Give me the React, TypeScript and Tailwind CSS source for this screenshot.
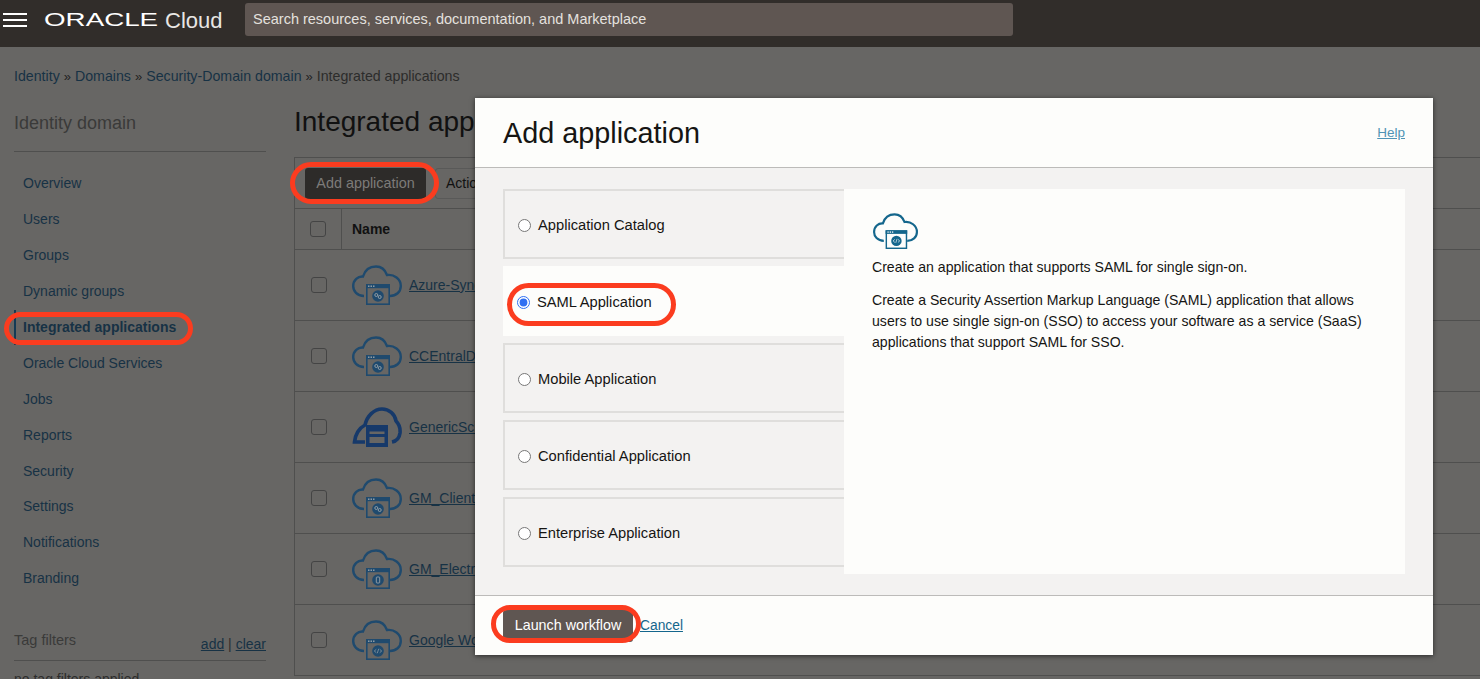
import React from "react";

const NAV_ITEMS = [
    "Overview",
    "Users",
    "Groups",
    "Dynamic groups",
    "Integrated applications",
    "Oracle Cloud Services",
    "Jobs",
    "Reports",
    "Security",
    "Settings",
    "Notifications",
    "Branding",
];

type Glyph = "link" | "code" | "phone" | "plain";

const ROWS: { name: string; glyph: Glyph }[] = [
    { name: "Azure-Sync-App", glyph: "link" },
    { name: "CCEntralDemo", glyph: "link" },
    { name: "GenericScim", glyph: "plain" },
    { name: "GM_ClientApp", glyph: "link" },
    { name: "GM_ElectronApp", glyph: "phone" },
    { name: "Google Workspace", glyph: "code" },
];

const OPTIONS = [
    { label: "Application Catalog", selected: false },
    { label: "SAML Application", selected: true },
    { label: "Mobile Application", selected: false },
    { label: "Confidential Application", selected: false },
    { label: "Enterprise Application", selected: false },
];

function CloudIcon({ glyph, color, dots, className }: { glyph: Glyph; color: string; dots: string; className?: string }) {
    if (glyph === "plain") {
        return (
            <svg viewBox="0 0 50 40" className={className} fill="none">
                <path d="M13 35H2.500C3 28 7 21 13 18C15 9 22 2 30 2C37 2 43 7 44 14C47 17 48.500 21 48 26C47.500 30 45 34 40 35" stroke={color} strokeWidth="3.600" />
                <rect x="14" y="18" width="22" height="22" fill={color} />
                <rect x="17.500" y="24.500" width="15" height="2.500" fill="#676664" />
                <rect x="17.500" y="30" width="15" height="6" fill="#676664" />
            </svg>
        );
    }
    return (
        <svg viewBox="0 0 50 40" className={className} fill="none">
            <path d="M12 31C5 31 1.200 26 1.200 21C1.200 15 6 11 11 11.500C13 5 18 1.500 24 1.500C29 1.500 33 4.500 35 10C42 9 48.800 14 48.800 21C48.800 27 44 31 38 31" stroke={color} strokeWidth="2.400" />
            <rect x="14.800" y="20" width="22.400" height="19.200" stroke={color} strokeWidth="1.600" />
            <rect x="14" y="19.200" width="24" height="4" fill={color} />
            <rect x="16" y="20.500" width="1.500" height="1.400" fill={dots} />
            <rect x="18.500" y="20.500" width="1.500" height="1.400" fill={dots} />
            <rect x="21" y="20.500" width="1.500" height="1.400" fill={dots} />
            <circle cx="26" cy="31" r="5.800" fill={color} />
            {glyph === "code" && <path d="M24.300 29.300l-2 1.700 2 1.700M27.700 29.300l2 1.700-2 1.700M26.700 28.800l-1.400 4.400" stroke={dots} strokeWidth=".7" />}
            {glyph === "link" && (
                <>
                    <circle cx="24.300" cy="30" r="1.500" stroke={dots} strokeWidth=".9" />
                    <circle cx="27.700" cy="32" r="1.500" stroke={dots} strokeWidth=".9" />
                </>
            )}
            {glyph === "phone" && <rect x="24.300" y="28" width="3.400" height="6" rx=".8" stroke={dots} strokeWidth=".9" />}
        </svg>
    );
}

function Sidebar() {
    return (
        <aside className="w-[294px] shrink-0 pl-[14px] pr-[28px] pt-[6px]">
            <h2 className="text-[18px] leading-[28px] font-light text-[#3a3a39] pb-[14px] border-b border-[#4f4f4e]">Identity domain</h2>
            <nav className="mt-[14px] flex flex-col">
                {NAV_ITEMS.map((item) =>
                    item === "Integrated applications" ? (
                        <a key={item} className="h-[35.900px] flex items-center pl-[7px] border-l-2 border-[#133a55] text-[14px] font-bold text-[#173245]">
                            {item}
                        </a>
                    ) : (
                        <a key={item} className="h-[35.900px] flex items-center pl-[9px] text-[14px] text-[#173245]">
                            {item}
                        </a>
                    )
                )}
            </nav>
            <div className="mt-[33px] flex items-end justify-between border-b border-[#4f4f4e] pb-[5px]">
                <span className="text-[14.500px] leading-[20px] pb-[5px] font-light text-[#3a3a39]">Tag filters</span>
                <span className="text-[14px] text-[#2c2c2b]">
                    <a className="underline text-[#173245]">add</a> | <a className="underline text-[#173245]">clear</a>
                </span>
            </div>
            <p className="mt-[8px] text-[14px] text-[#2c2c2b]">no tag filters applied</p>
        </aside>
    );
}

function AppTable() {
    return (
        <div className="flex-1 min-w-0">
            <h1 className="pt-[1px] pb-[17px] text-[28px] leading-[36px] text-[#111] whitespace-nowrap">Integrated applications</h1>
            <div className="border-l border-t border-[#4f4f4e]">
                <div className="h-[51px] flex items-center gap-[9px] pl-[10px] border-b border-[#4f4f4e]">
                    <button className="h-[31px] w-[121px] pt-[1px] rounded-[3px] bg-[#2d2b29] text-[14.400px] text-[#7d7b79]">Add application</button>
                    <button className="h-[31px] px-[10px] border border-[#595958] rounded-[3px] text-[14px] text-[#111]">Actions</button>
                </div>
                <div className="h-[41px] flex border-b border-[#4f4f4e]">
                    <div className="w-[47px] flex items-center justify-center border-r border-[#4f4f4e]">
                        <span className="w-[16px] h-[16px] rounded-[3px] border border-[#444]" />
                    </div>
                    <div className="pl-[10px] flex items-center text-[14px] font-bold text-[#111]">Name</div>
                </div>
                {ROWS.map((row) => (
                    <div key={row.name} className="h-[71px] flex items-center border-b border-[#4f4f4e]">
                        <div className="w-[47px] flex justify-center">
                            <span className="w-[16px] h-[16px] rounded-[3px] border border-[#444]" />
                        </div>
                        <CloudIcon glyph={row.glyph} color={row.glyph === "plain" ? "#16396a" : "#1f4a6e"} dots="#9aa3a8" className="ml-[10px] w-[50px] h-[40px]" />
                        <a className="ml-[7px] text-[14px] underline text-[#173245] whitespace-nowrap">{row.name}</a>
                    </div>
                ))}
            </div>
        </div>
    );
}

function AddApplicationDialog() {
    return (
        <div className="absolute left-[475px] top-[98px] w-[958px] h-[557px] flex flex-col bg-[#f3f2f1] shadow-[0_1px_5px_rgba(0,0,0,0.6)] z-20">
            <div className="h-[70px] shrink-0 flex items-center justify-between px-[28px] pt-[2px] bg-[#fdfdfb] border-b border-[#bcbbb9]">
                <h2 className="text-[28.800px] text-[#161513]">Add application</h2>
                <a className="text-[13.500px] font-light underline text-[#4f93b5]">Help</a>
            </div>
            <div className="flex-1 flex px-[28px] pt-[21px]">
                <div className="w-[341px] shrink-0 flex flex-col gap-[7px]">
                    {OPTIONS.map((opt) =>
                        opt.selected ? (
                            <label key={opt.label} className="h-[70px] flex items-center gap-[7px] pl-[14px] pt-[2px] bg-[#fdfdfb] text-[14.700px] text-[#161513]">
                                <input type="radio" name="app-type" defaultChecked className="w-[13px] h-[13px] m-0 accent-[#2f6ff2]" />
                                {opt.label}
                            </label>
                        ) : (
                            <label key={opt.label} className="h-[70px] flex items-center gap-[7px] pl-[13px] pt-[2px] border-2 border-r-0 border-[#dfdedc] text-[14.700px] text-[#161513]">
                                <input type="radio" name="app-type" className="w-[13px] h-[13px] m-0" />
                                {opt.label}
                            </label>
                        )
                    )}
                </div>
                <div className="flex-1 h-[385px] bg-[#fdfdfb] px-[28px] pt-[24px] text-[14.100px] leading-[21px] text-[#161513]">
                    <CloudIcon glyph="code" color="#14668c" dots="#ffffff" className="w-[45px] h-[36px] ml-[1px]" />
                    <p className="mt-[8px]">Create an application that supports SAML for single sign-on.</p>
                    <p className="mt-[12px] w-[490px]">
                        Create a Security Assertion Markup Language (SAML) application that allows users to use single sign-on (SSO) to access your software as a service (SaaS) applications that support SAML for SSO.
                    </p>
                </div>
            </div>
            <div className="h-[60px] shrink-0 flex items-center gap-[7px] pl-[28px] bg-[#fdfdfb] border-t border-[#bcbbb9]">
                <button className="h-[32px] w-[130px] rounded-[3px] bg-[#5f5652] text-[14.300px] text-white">Launch workflow</button>
                <a className="pt-[1px] text-[13.800px] underline text-[#14668c]">Cancel</a>
            </div>
        </div>
    );
}

export default function App() {
    return (
        <div className="relative h-[679px] overflow-hidden bg-[#676664] font-['Liberation_Sans',Arial,sans-serif]">
            <header className="h-[47px] bg-[#312d2a] text-white">
                <div className="h-[39px] flex items-center">
                    <div className="ml-[3px] w-[24px] flex flex-col gap-[4px]">
                        <span className="h-[2px] bg-white" />
                        <span className="h-[2px] bg-white" />
                        <span className="h-[2px] bg-white" />
                    </div>
                    <div className="ml-[17px] mt-[2px] w-[114px] text-[18.500px] leading-none">
                        <span className="inline-block origin-left scale-x-[1.500]">ORACLE</span>
                    </div>
                    <span className="ml-[7px] mt-[2px] w-[56px] text-[22px] leading-none font-light text-[#e8e6e4]">Cloud</span>
                    <div className="ml-[24px] w-[768px] h-[33px] flex items-center pl-[8px] pt-[1px] rounded-[3px] bg-[#5f5652] text-[14.500px] text-[#e4e1df]">
                        Search resources, services, documentation, and Marketplace
                    </div>
                </div>
            </header>

            <div className="h-[40px] pt-[19px] pl-[14px] flex items-center gap-[4px] text-[14.200px] text-[#2c2c2b]">
                <a className="text-[#173245]">Identity</a>
                <span className="text-[13px] text-[#222]">»</span>
                <a className="text-[#173245]">Domains</a>
                <span className="text-[13px] text-[#222]">»</span>
                <a className="text-[#173245]">Security-Domain domain</a>
                <span className="text-[13px] text-[#222]">»</span>
                <span>Integrated applications</span>
            </div>

            <div className="flex pt-[16px]">
                <Sidebar />
                <AppTable />
            </div>

            <AddApplicationDialog />

            {/* red highlight rings drawn on top of the screenshot */}
            <div className="absolute z-30 left-[290px] top-[162px] w-[149px] h-[42px] rounded-full border-[5px] border-[#fb3c1f]" />
            <div className="absolute z-30 left-[4px] top-[312px] w-[189px] h-[33px] rounded-full border-[5px] border-[#fb3c1f]" />
            <div className="absolute z-30 left-[507px] top-[283px] w-[169px] h-[43px] rounded-full border-[5px] border-[#fb3c1f]" />
            <div className="absolute z-30 left-[491px] top-[605px] w-[150px] h-[38px] rounded-full border-[5px] border-[#fb3c1f]" />
        </div>
    );
}
